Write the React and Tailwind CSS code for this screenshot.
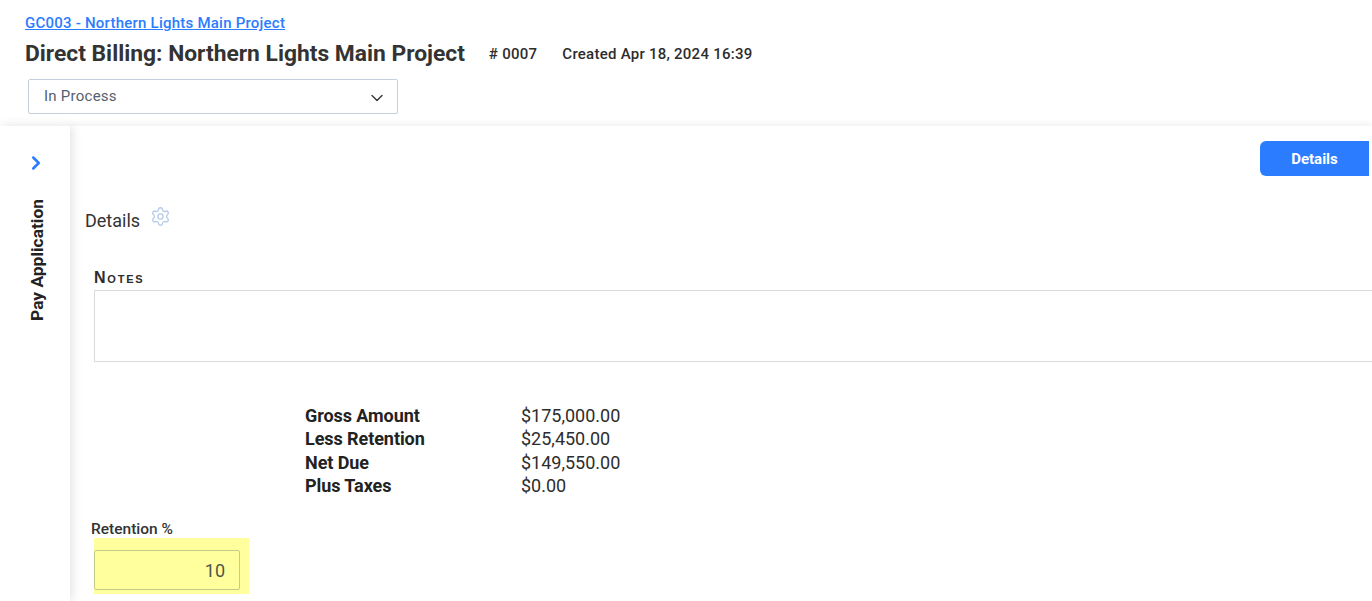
import React from 'react';
import { ChevronDown, ChevronRight, Settings } from 'lucide-react';

const rows = [
  ['Gross Amount', '$175,000.00'],
  ['Less Retention', '$25,450.00'],
  ['Net Due', '$149,550.00'],
  ['Plus Taxes', '$0.00'],
];

const App = () => {
  return (
    <div className="w-[1372px] h-[601px] overflow-hidden bg-white text-[#2d2d2d] font-['Roboto',sans-serif]">
      {/* Header */}
      <div className="h-[126px] pl-[25px] pt-[14px]">
        <a href="#" className="block text-[15px] leading-[18px] font-medium tracking-[0.23px] text-[#2b7cff] underline">
          GC003 - Northern Lights Main Project
        </a>
        <div className="flex items-center mt-[6px] h-[32px]">
          <h1 className="text-[22.8px] font-bold leading-[32px] text-[#333333]">Direct Billing: Northern Lights Main Project</h1>
          <span className="ml-[24px] text-[15px] tracking-[0.27px] font-medium">
            # 0007
          </span>
          <span className="ml-[25px] text-[15px] tracking-[0.25px] font-medium">Created Apr 18, 2024 16:39</span>
        </div>
        <div className="ml-[3px] mt-[9px] w-[370px] h-[35px] flex items-center justify-between pl-[15px] pr-[10px] border border-[#c5d0de] rounded-[2px]">
          <span className="text-[15px] tracking-[0.25px] text-[#56606e] -mt-[1px]">In Process</span>
          <ChevronDown size={20} strokeWidth={1.6} className="text-[#333333] mt-[3px]" />
        </div>
      </div>

      <div className="flex h-[475px]">
        {/* Collapsed side rail */}
        <div className="relative z-10 w-[70px] shrink-0 flex flex-col items-center bg-white shadow-[2px_0_10px_rgba(0,0,0,0.12)]">
          <ChevronRight size={22} strokeWidth={2.8} className="text-[#2b7cff] mt-[26px] ml-[2px]" />
          <div className="mt-[25px] ml-[3px] text-[17.4px] font-bold leading-[20px] text-[#222222] [writing-mode:vertical-rl] rotate-180">
            Pay Application
          </div>
        </div>

        {/* Main panel */}
        <div className="flex-1 min-w-0 shadow-[0_-3px_6px_rgba(0,0,0,0.05)]">
          <div className="flex justify-end h-[50px] pt-[15px] pr-[3px]">
            <button className="w-[109px] h-[35px] pt-[1px] rounded-l-[6px] bg-[#2b7cff] text-white text-[15px] font-bold">
              Details
            </button>
          </div>

          <div className="flex items-start pl-[15px] pt-[30px] h-[93px]">
            <span className="text-[18px] leading-[24px] text-[#333333] mt-[3px]">Details</span>
            <Settings size={21} strokeWidth={1.5} className="ml-[10px] text-[#b4cbe8]" />
          </div>

          <div className="pl-[24px]">
            <div className="text-[16px] leading-[18px] font-bold tracking-[1.8px] text-[#2d2d2d] font-['Liberation_Sans',sans-serif] [font-variant:small-caps]">
              Notes
            </div>
            <div className="h-[72px] mt-[3px] border border-[#d9d9d9] border-r-0" />
          </div>

          <div className="ml-[235px] mt-[42px]">
            {rows.map(([label, value]) => (
              <div key={label} className="flex text-[18px] leading-[23.4px]">
                <span className="w-[216px] font-bold text-[#222222] tracking-[-0.07px]">{label}</span>
                <span className="text-[#2d2d2d]">{value}</span>
              </div>
            ))}
          </div>

          <div className="ml-[21px] mt-[22px] text-[15.5px] leading-[18px] font-medium text-[#333333]">Retention %</div>
          <div className="ml-[24px] w-[155px] h-[56px] pt-[12px] bg-[#ffff9e]">
            <div className="w-[146px] h-[40px] flex items-center justify-end pr-[14px] pt-[2px] border border-[#c4cc88] rounded-[2px] text-[18px] text-[#4f5648]">
              10
            </div>
          </div>
        </div>
      </div>
    </div>
  );
};

export default App;
